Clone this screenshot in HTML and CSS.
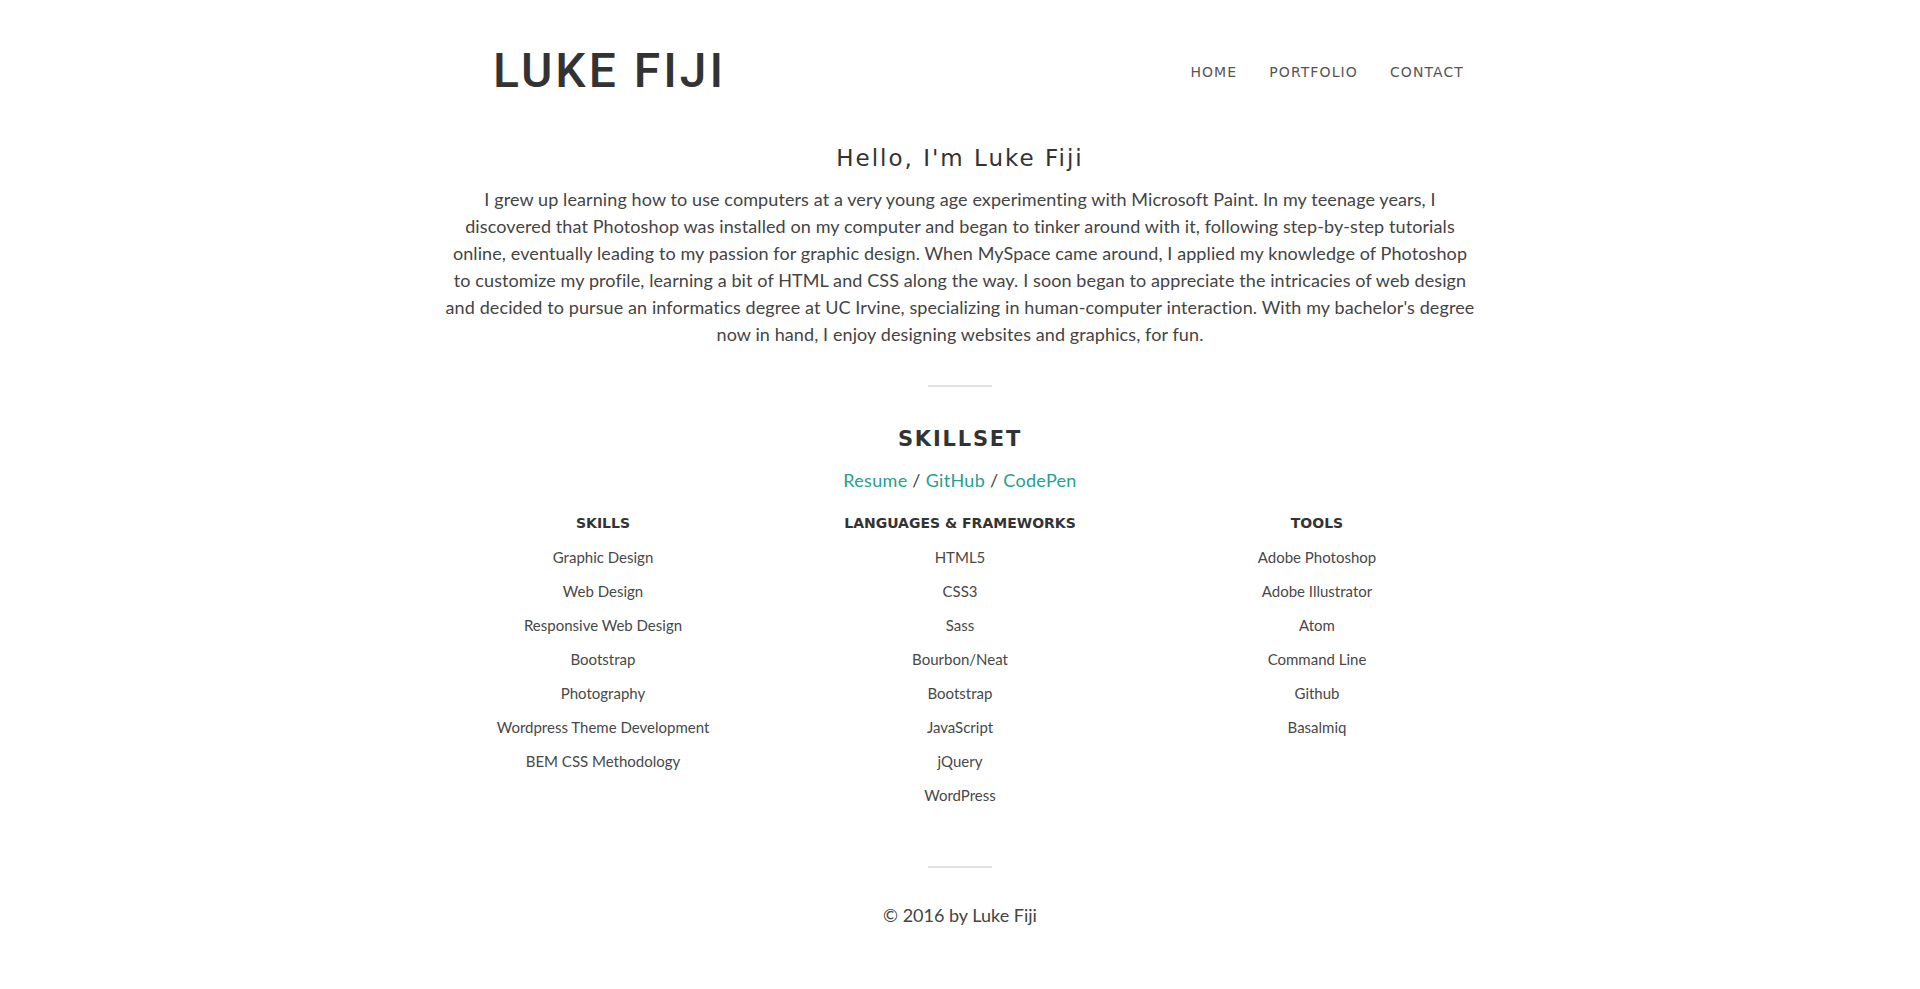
FILE: index.html
```html
<!DOCTYPE html>
<html lang="en">
<head>
<meta charset="utf-8">
<title>Luke Fiji</title>
<link rel="stylesheet" href="styles.css">
</head>
<body>
<header class="site-header">
  <a class="logo" href="#">LUKE FIJI</a>
  <nav class="nav">
    <a href="#">HOME</a>
    <a href="#">PORTFOLIO</a>
    <a href="#">CONTACT</a>
  </nav>
</header>
<main class="content">
  <section class="about">
    <h1 class="about__title">Hello, I'm Luke Fiji</h1>
    <p class="about__text">I grew up learning how to use computers at a very young age experimenting with Microsoft Paint. In my teenage years, I<br>
    discovered that Photoshop was installed on my computer and began to tinker around with it, following step-by-step tutorials<br>
    online, eventually leading to my passion for graphic design. When MySpace came around, I applied my knowledge of Photoshop<br>
    to customize my profile, learning a bit of HTML and CSS along the way. I soon began to appreciate the intricacies of web design<br>
    and decided to pursue an informatics degree at UC Irvine, specializing in human-computer interaction. With my bachelor's degree<br>
    now in hand, I enjoy designing websites and graphics, for fun.</p>
  </section>
  <hr class="divider">
  <section class="skillset">
    <h2 class="skillset__title">SKILLSET</h2>
    <p class="skillset__links"><a href="#">Resume</a> / <a href="#">GitHub</a> / <a href="#">CodePen</a></p>
    <div class="skillset__grid">
      <div class="skill-col">
        <h3 class="skill-col__title">SKILLS</h3>
        <ul class="skill-col__list">
          <li>Graphic Design</li>
          <li>Web Design</li>
          <li>Responsive Web Design</li>
          <li>Bootstrap</li>
          <li>Photography</li>
          <li>Wordpress Theme Development</li>
          <li>BEM CSS Methodology</li>
        </ul>
      </div>
      <div class="skill-col">
        <h3 class="skill-col__title">LANGUAGES &amp; FRAMEWORKS</h3>
        <ul class="skill-col__list">
          <li>HTML5</li>
          <li>CSS3</li>
          <li>Sass</li>
          <li>Bourbon/Neat</li>
          <li>Bootstrap</li>
          <li>JavaScript</li>
          <li>jQuery</li>
          <li>WordPress</li>
        </ul>
      </div>
      <div class="skill-col">
        <h3 class="skill-col__title">TOOLS</h3>
        <ul class="skill-col__list">
          <li>Adobe Photoshop</li>
          <li>Adobe Illustrator</li>
          <li>Atom</li>
          <li>Command Line</li>
          <li>Github</li>
          <li>Basalmiq</li>
        </ul>
      </div>
    </div>
  </section>
  <hr class="divider divider--footer">
</main>
<footer class="site-footer">© 2016 by Luke Fiji</footer>
</body>
</html>
```

FILE: styles.css
```css
* { box-sizing: border-box; }

body {
  margin: 0;
  background: #fff;
  color: #444;
  font-family: Lato, "Open Sans", sans-serif;
}

a { text-decoration: none; color: inherit; }

.site-header {
  width: 1040px;
  margin: 0 auto;
  padding: 47px 16px 0 53px;
  display: flex;
  justify-content: space-between;
  align-items: center;
}

.logo {
  font-family: Roboto, sans-serif;
  font-weight: 500;
  font-size: 48px;
  line-height: 48px;
  letter-spacing: 3px;
  color: #333;
}

.nav {
  display: flex;
  gap: 32px;
  padding-top: 2px;
}

.nav a {
  font-family: "DejaVu Sans", sans-serif;
  font-size: 14px;
  line-height: 15px;
  letter-spacing: 1.1px;
  color: #555;
}

.content {
  width: 1100px;
  margin: 0 auto;
  text-align: center;
}

.about { padding-top: 50px; }

.about__title {
  margin: 0;
  font-family: "DejaVu Sans", sans-serif;
  font-weight: 500;
  font-size: 23px;
  line-height: 26px;
  letter-spacing: 2px;
  color: #333;
}

.about__text {
  margin: 15px auto 0;
  font-size: 18px;
  line-height: 27px;
  letter-spacing: 0.1px;
  color: #444;
}

.divider {
  width: 64px;
  height: 2px;
  margin: 37px auto 0;
  border: 0;
  background: #e2e2e2;
}

.skillset { padding-top: 39px; }

.skillset__title {
  margin: 0;
  font-family: "DejaVu Sans", sans-serif;
  font-weight: 700;
  font-size: 21px;
  line-height: 26px;
  letter-spacing: 1.8px;
  color: #333;
}

.skillset__links {
  margin: 15px 0 0;
  font-size: 18px;
  line-height: 27px;
  letter-spacing: 0.3px;
  color: #444;
}

.skillset__links a { color: #26a08f; }

.skillset__grid {
  display: grid;
  grid-template-columns: repeat(3, 357px);
  justify-content: center;
  margin-top: 20px;
}

.skill-col__title {
  margin: 0;
  font-family: "DejaVu Sans", sans-serif;
  font-weight: 700;
  font-size: 14px;
  line-height: 18px;
  color: #333;
}

.skill-col__list {
  list-style: none;
  margin: 8px 0 0;
  padding: 0;
}

.skill-col__list li {
  font-size: 15px;
  line-height: 34px;
  color: #484848;
}

.divider--footer { margin-top: 54px; }

.site-footer {
  margin-top: 34px;
  padding-bottom: 60px;
  text-align: center;
  font-size: 18px;
  line-height: 27px;
  color: #444;
}
```
